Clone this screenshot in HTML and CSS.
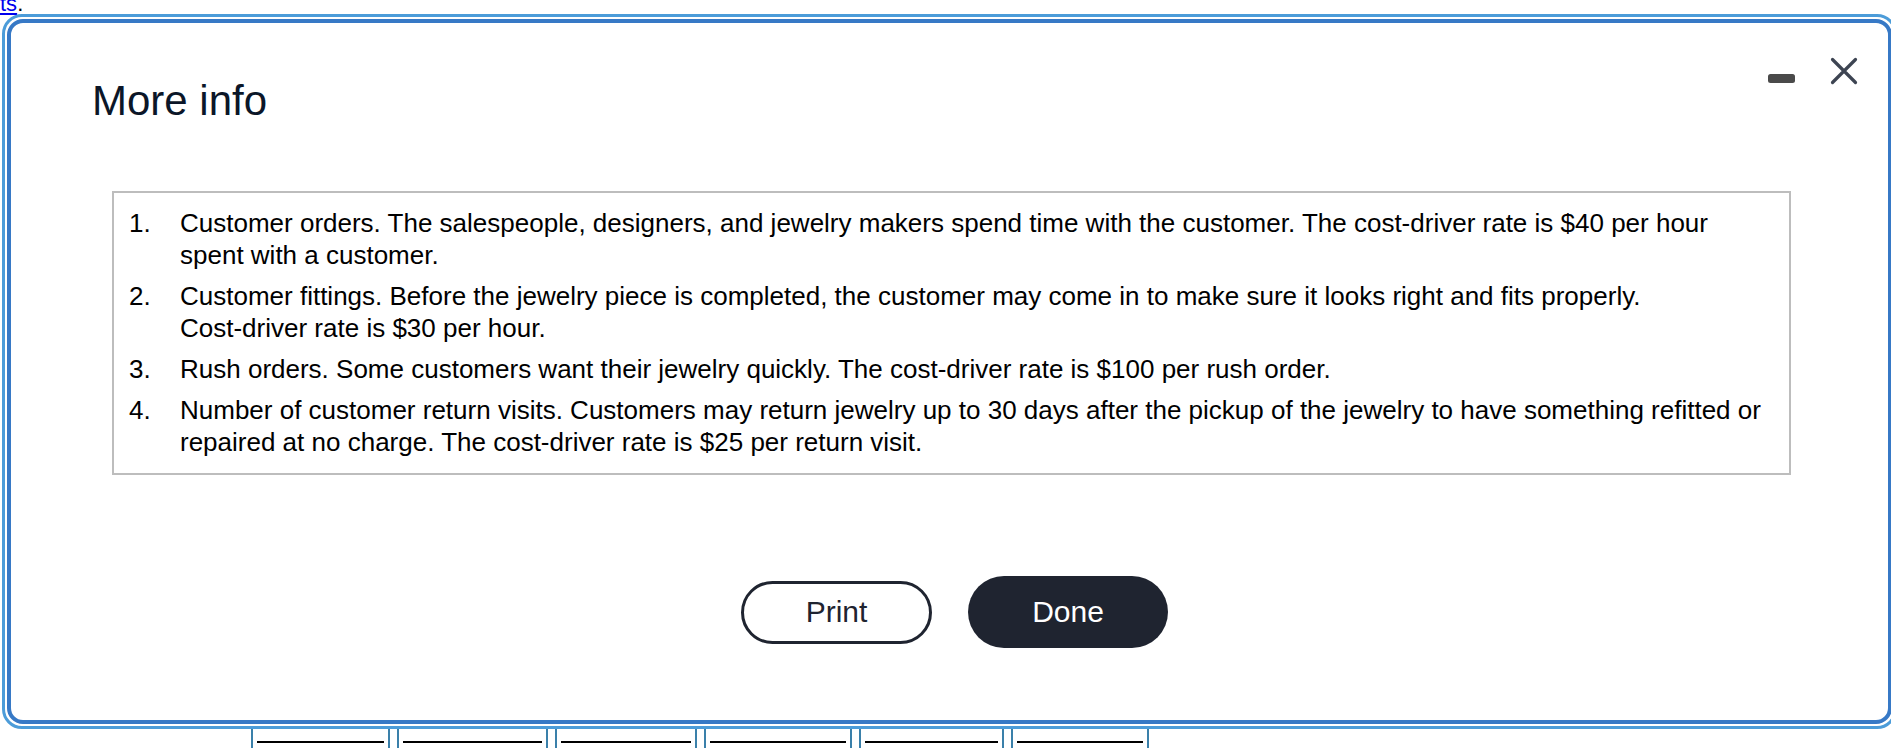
FILE: index.html
```html
<!DOCTYPE html>
<html lang="en">
<head>
<meta charset="utf-8">
<title>More info</title>
<link rel="stylesheet" href="styles.css">
</head>
<body>
<div class="page">
  <p class="frag"><a href="#" class="frag-link">ts</a>.</p>
  <div class="cells">
    <div class="cell cell-1"><div class="cell-line"></div></div>
    <div class="cell cell-2"><div class="cell-line"></div></div>
    <div class="cell cell-3"><div class="cell-line"></div></div>
    <div class="cell cell-4"><div class="cell-line"></div></div>
    <div class="cell cell-5"><div class="cell-line"></div></div>
    <div class="cell cell-6"><div class="cell-line"></div></div>
  </div>
</div>

<div class="dialog" role="dialog" aria-label="More info">
  <div class="dialog-inner">
    <div class="dialog-header">
      <h1 class="dialog-title">More info</h1>
      <div class="win-controls">
        <span class="minimize" aria-label="Minimize"></span>
        <svg class="close" width="28" height="28" viewBox="0 0 28 28" aria-label="Close">
          <path d="M2.5 2.5 L25.5 25.5 M25.5 2.5 L2.5 25.5" fill="none" stroke="#3d4452" stroke-width="3.2" stroke-linecap="round"/>
        </svg>
      </div>
    </div>

    <div class="info-box">
      <ol class="info-list">
        <li class="info-item"><span class="num">1.</span><span class="txt">Customer orders. The salespeople, designers, and jewelry makers spend time with the customer. The cost-driver rate is $40 per hour spent with a customer.</span></li>
        <li class="info-item"><span class="num">2.</span><span class="txt">Customer fittings. Before the jewelry piece is completed, the customer may come in to make sure it looks right and fits properly. <span class="nowrap">Cost-driver</span> rate is $30 per hour.</span></li>
        <li class="info-item"><span class="num">3.</span><span class="txt">Rush orders. Some customers want their jewelry quickly. The cost-driver rate is $100 per rush order.</span></li>
        <li class="info-item"><span class="num">4.</span><span class="txt">Number of customer return visits. Customers may return jewelry up to 30 days after the pickup of the jewelry to have something refitted or repaired at no charge. The cost-driver rate is $25 per return visit.</span></li>
      </ol>
    </div>

    <div class="actions">
      <button class="btn btn-print" type="button">Print</button>
      <button class="btn btn-done" type="button">Done</button>
    </div>
  </div>
</div>
</body>
</html>
```

FILE: styles.css
```css
html, body {
  margin: 0;
  padding: 0;
  background: #ffffff;
  overflow: hidden;
  width: 1891px;
  height: 748px;
}

body {
  font-family: "Liberation Sans", Arial, sans-serif;
  color: #000;
}

/* ---------- background page ---------- */
.page {
  display: flex;
  flex-direction: column;
}

.frag {
  margin: -9px 0 0 0;
  font-size: 22px;
  line-height: 25px;
  color: #000;
}

.frag-link {
  color: #0000ee;
  text-decoration: underline;
}

.cells {
  display: flex;
  gap: 7px;
  margin: 684px 0 0 251px;
}

.cell {
  box-sizing: border-box;
  height: 60px;
  border-left: 2px solid #3a80aa;
  border-right: 2px solid #3a80aa;
  padding-top: 41px;
}

.cell-1 { width: 139px; }
.cell-2 { width: 151px; }
.cell-3 { width: 142px; }
.cell-4 { width: 148px; }
.cell-5 { width: 145px; }
.cell-6 { width: 138px; }

.cell-line {
  height: 2px;
  margin: 0 4px;
  background: #000;
}

/* ---------- dialog ---------- */
.dialog {
  position: absolute;
  left: 2px;
  top: 14px;
  width: 1895px;
  height: 715px;
  box-sizing: border-box;
  border: 3px solid #4c9cd9;
  border-radius: 20px;
  padding: 2px;
  background: #ffffff;
}

.dialog-inner {
  box-sizing: border-box;
  height: 100%;
  border: 4px solid #3779c6;
  border-radius: 16px;
  padding-top: 34px;
  display: flex;
  flex-direction: column;
}

.dialog-header {
  display: flex;
  justify-content: space-between;
  align-items: flex-start;
  padding-right: 30px;
}

.dialog-title {
  margin: 20px 0 0 81px;
  font-size: 42px;
  line-height: 48px;
  font-weight: normal;
  color: #0b1628;
}

.win-controls {
  display: flex;
  align-items: flex-start;
  gap: 35px;
}

.minimize {
  display: block;
  width: 27px;
  height: 9px;
  margin-top: 17px;
  border-radius: 2.5px;
  background: #4a4a4a;
}

.close {
  display: block;
}

/* ---------- info box ---------- */
.info-box {
  margin: 66px 97px 0 101px;
  border: 2px solid #bdbdbd;
  padding: 14px 26px 15px 15px;
}

.info-list {
  list-style: none;
  margin: 0;
  padding: 0;
}

.info-item {
  display: flex;
  font-size: 26px;
  line-height: 32px;
  color: #000;
}

.info-item + .info-item {
  margin-top: 9px;
}

.num {
  flex: none;
  width: 51px;
}

.txt {
  flex: 1;
}

.nowrap {
  white-space: nowrap;
}

/* ---------- actions ---------- */
.actions {
  display: flex;
  justify-content: center;
  align-items: center;
  gap: 36px;
  margin-top: 101px;
  padding-left: 10px;
}

.btn {
  box-sizing: border-box;
  font-family: "Liberation Sans", Arial, sans-serif;
  font-size: 30px;
  cursor: pointer;
  padding: 0;
}

.btn-print {
  width: 191px;
  height: 63px;
  border: 3px solid #1f2430;
  border-radius: 32px;
  background: #ffffff;
  color: #1f2430;
}

.btn-done {
  width: 200px;
  height: 72px;
  border: none;
  border-radius: 36px;
  background: #1f2430;
  color: #ffffff;
}
```
